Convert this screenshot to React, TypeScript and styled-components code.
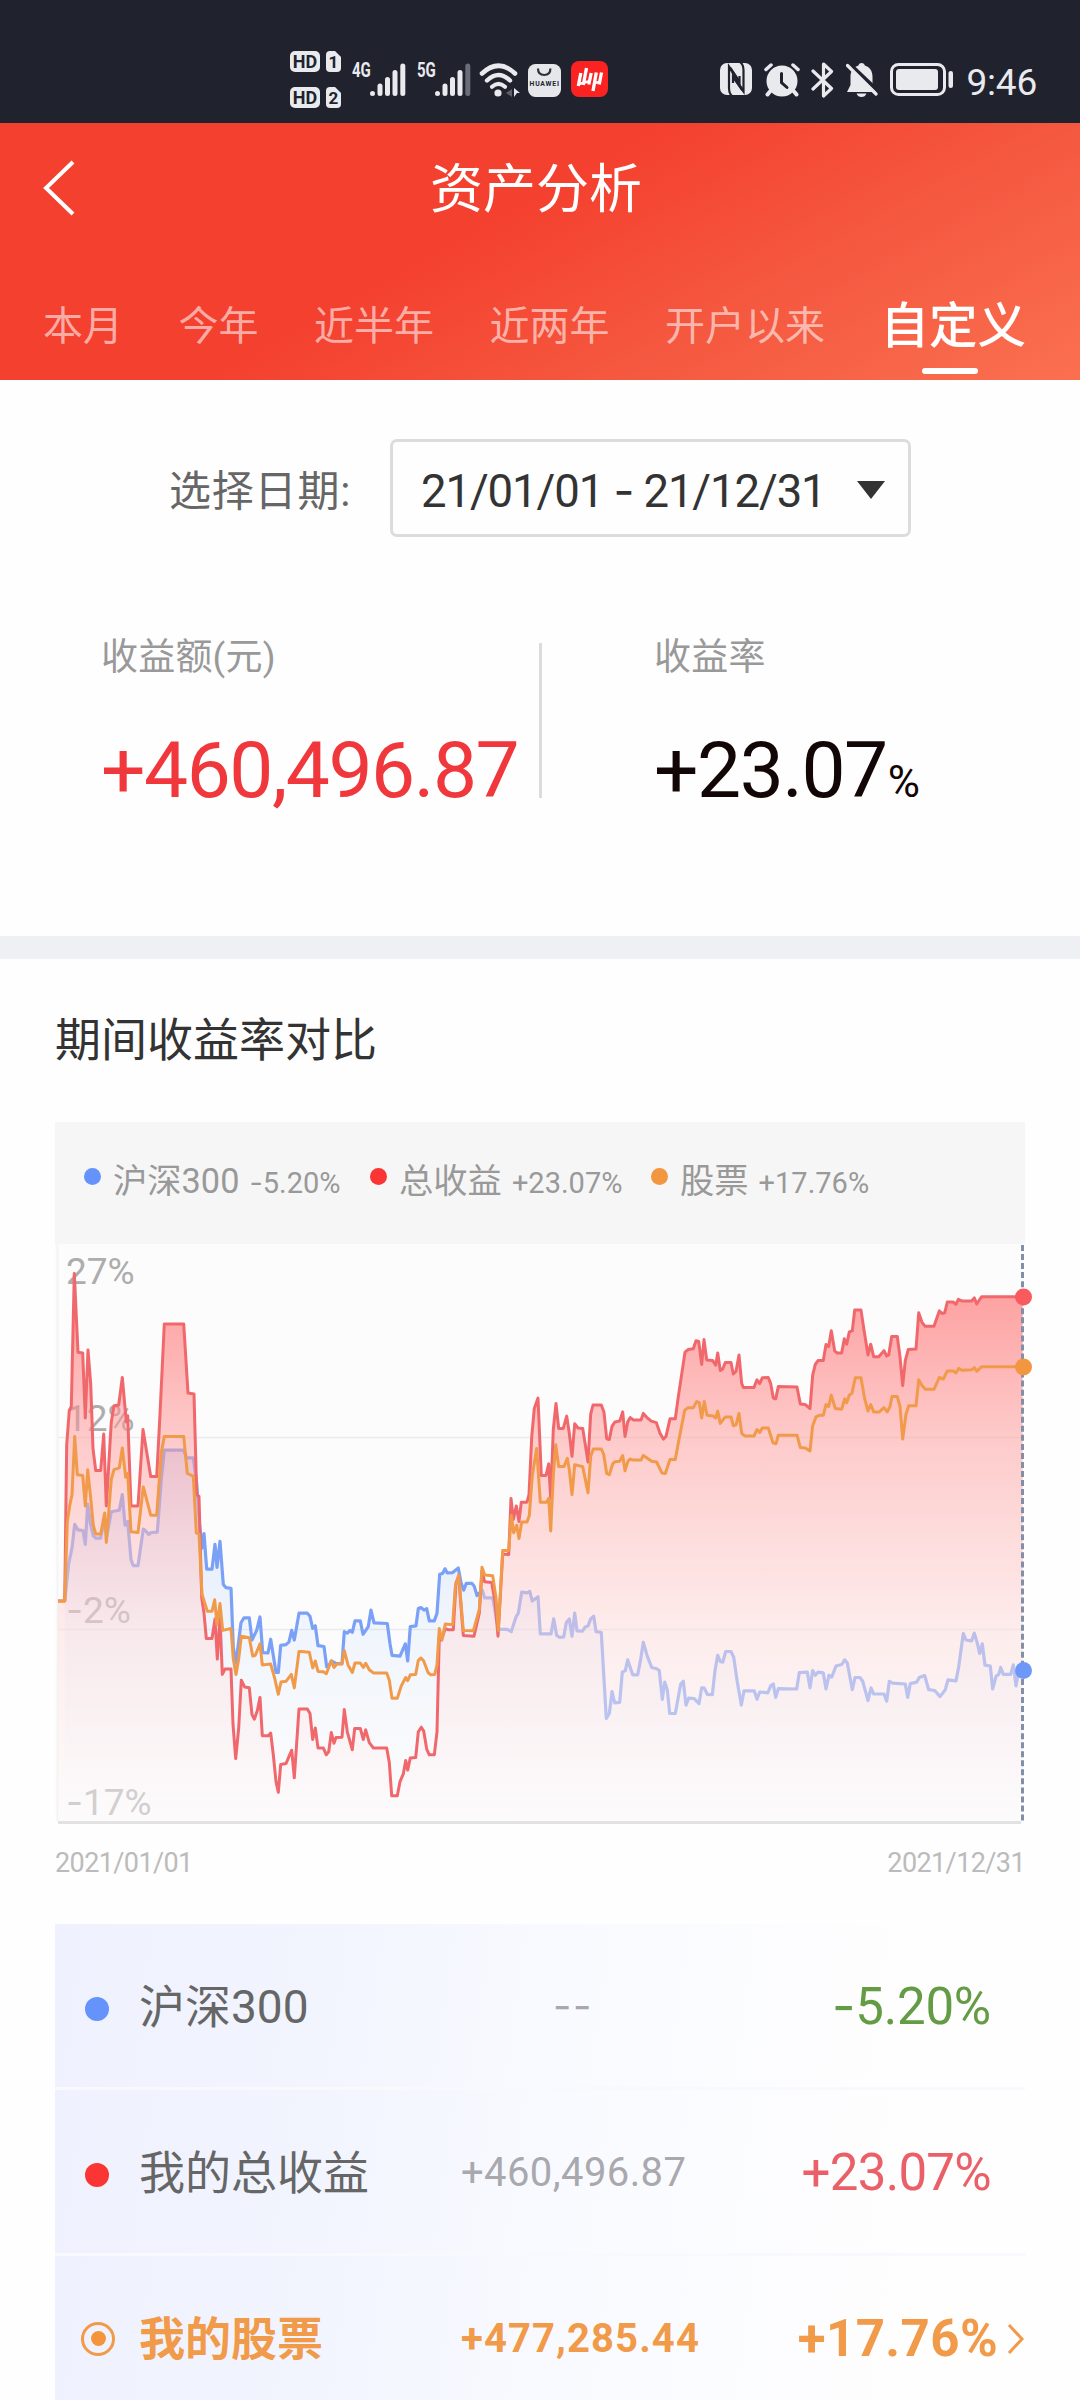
import React from "react";
import styled, { createGlobalStyle } from "styled-components";

const GlobalStyle = createGlobalStyle`
  * { box-sizing: border-box; }
  body { margin: 0; background: #fff; }
`;

const Page = styled.div`
  width: 1080px;
  height: 2400px;
  overflow: hidden;
  background: #fefefe;
  font-family: Roboto, "Noto Sans CJK SC", sans-serif;
  display: flex;
  flex-direction: column;
  svg { display: block; flex: none; }
`;

/* ---------- status bar ---------- */

const StatusBar = styled.div`
  height: 123px;
  flex: none;
  background: #20222e;
  padding: 51px 43px 0 290px;
  display: flex;
  align-items: flex-start;
  color: #e9eaee;
`;

const SimStack = styled.div`
  display: flex;
  flex-direction: column;
  gap: 15px;
  width: 63px;
`;

const SimRow = styled.div`
  display: flex;
  gap: 6px;
  height: 21px;
`;

const HdBadge = styled.span`
  width: 30px;
  height: 21px;
  border-radius: 5px;
  background: #e9eaee;
  color: #20222e;
  font: 700 18px/21px Roboto, sans-serif;
  text-align: center;
`;

const SimBadge = styled.span`
  width: 15px;
  height: 21px;
  border-radius: 4px;
  clip-path: polygon(0 0, 60% 0, 100% 28%, 100% 100%, 0 100%);
  background: #e9eaee;
  color: #20222e;
  font: 700 17px/22px Roboto, sans-serif;
  text-align: center;
`;

const NetGroup = styled.div<{ $w: number }>`
  display: flex;
  width: ${(p) => p.$w}px;
  padding-top: 12px;
`;

const NetLabel = styled.span`
  width: 18px;
  font: 700 20px/15px Roboto, sans-serif;
  transform: scaleX(0.75);
  transform-origin: left;
`;

const IconSlot = styled.div<{ $w: number; $top?: number }>`
  width: ${(p) => p.$w}px;
  padding-top: ${(p) => p.$top ?? 10}px;
  flex: none;
`;

const Clock = styled.span`
  padding-top: 14px;
  font: 400 37px/36px Roboto, sans-serif;
  letter-spacing: -0.2px;
  color: #e9eaee;
`;

const SignalBars = ({ weak }: { weak?: boolean }) => (
  <svg width="36" height="34" viewBox="0 0 36 34" strokeWidth="5" strokeLinecap="round" stroke="#e9eaee">
    <path d="M2.5 30.5v0.1M10 23v7.6M17.5 16.5v14.1M25 9.5v21.1" />
    <path d="M32.8 3v27.6" stroke={weak ? "#6b6d78" : "#e9eaee"} />
  </svg>
);

const WifiIcon = () => (
  <svg width="42" height="35" viewBox="0 0 42 35" fill="none" stroke="#e9eaee" strokeLinecap="round">
    <path d="M3 10.5Q19.500 -5 36 10.5" strokeWidth="4.600" />
    <path d="M8 17.5Q19.500 6.500 31 17.5" strokeWidth="4.400" />
    <path d="M13 23.8Q19.500 18 26 23.8" strokeWidth="4.200" />
    <circle cx="19" cy="30" r="3.600" fill="#e9eaee" stroke="none" />
    <path d="M33 26l-6 4 6 4z" fill="#5d5f69" stroke="none" />
    <path d="M35 25v9l3-4h3z" fill="#e9eaee" stroke="none" />
  </svg>
);

const HuaweiIcon = () => (
  <svg width="33" height="33" viewBox="0 0 33 33">
    <rect width="33" height="33" rx="7.5" fill="#e6e7ea" />
    <path d="M10 4.5q0 6.500 6.200 6.500t6.200-6.500" fill="none" stroke="#30323d" strokeWidth="2.2" />
    <text x="1.5" y="21.5" fontSize="6.8" fontWeight="700" fontFamily="Roboto, sans-serif" fill="#20222e" textLength="29.5">HUAWEI</text>
  </svg>
);

const BrokerIcon = () => (
  <svg width="37" height="36" viewBox="0 0 37 36">
    <rect width="37" height="36" rx="8" fill="#fb2322" />
    <g fill="none" stroke="#fff" strokeWidth="3.300">
      <path d="M9.800 12L7.300 25M15.500 7L12.300 24M20.200 12L17.800 23.500M25.300 11.500L22 30M30.500 11.500L28.200 23.500" />
      <path d="M8 23l9-2.500M23 22l6-1" strokeWidth="2.600" />
    </g>
  </svg>
);

const NfcIcon = () => (
  <svg width="32" height="32" viewBox="0 0 32 32">
    <rect width="32" height="32" rx="7" fill="#e9eaee" />
    <g fill="none" stroke="#20222e" strokeWidth="2.200" strokeLinejoin="miter">
      <path d="M12 33Q9 30.500 9 25V3.500L19.500 19V13" />
      <path d="M20 -1Q23.500 1.500 23.500 7V28.500L13 13.500V20" />
      <path d="M10 5l9 13.500M22.500 27l-9-13" strokeWidth="3" />
    </g>
  </svg>
);

const AlarmIcon = () => (
  <svg width="36" height="34" viewBox="0 0 36 34" stroke="#e9eaee" strokeLinecap="round" fill="none">
    <circle cx="18" cy="18" r="15.5" fill="#e9eaee" stroke="none" />
    <path d="M2 6.5L7 2M34 6.5L29 2" strokeWidth="3.5" />
    <path d="M6 28.5l-2.500 3M30 28.5l2.500 3" strokeWidth="4" />
    <path d="M17.5 10.5v9l5.500 5" stroke="#20222e" strokeWidth="3" />
  </svg>
);

const BluetoothIcon = () => (
  <svg width="23" height="36" viewBox="0 0 23 36" fill="none" stroke="#e9eaee" strokeWidth="3.200" strokeLinecap="round" strokeLinejoin="round">
    <path d="M2 9l18.500 17.500-8 7.500V2l8 7.500L2 27" />
  </svg>
);

const BellOffIcon = () => (
  <svg width="32" height="34" viewBox="0 0 32 34">
    <path d="M15.500 0c2 0 3 1 3.300 2.500 5 1.600 7.700 5.500 7.700 11V22l3.500 7H1l3.500-7v-8.500c0-5.500 3-9.400 8-11C12.800 1 13.700 0 15.500 0z" fill="#e9eaee" />
    <path d="M10.500 30.500h10q-1.500 3.500-5 3.500t-5-3.500z" fill="#e9eaee" />
    <path d="M2.500 0L32 28" stroke="#20222e" strokeWidth="4" />
    <path d="M1.500 2.500L30 31" stroke="#e9eaee" strokeWidth="3.200" strokeLinecap="round" />
  </svg>
);

const BatteryIcon = () => (
  <svg width="64" height="34" viewBox="0 0 64 34">
    <rect x="1.500" y="1.500" width="53" height="30" rx="7" fill="none" stroke="#e9eaee" strokeWidth="3" />
    <rect x="6" y="6" width="42" height="21" rx="3" fill="#e9eaee" />
    <rect x="58.500" y="8" width="4.500" height="17" rx="2.200" fill="#e9eaee" />
  </svg>
);

/* ---------- header ---------- */

const Header = styled.header`
  height: 257px;
  flex: none;
  background: linear-gradient(151deg, #f4402f 43%, #f55a41 72%, #fb7051 100%);
  color: #fff;
  display: flex;
  flex-direction: column;
`;

const TitleRow = styled.div`
  height: 132px;
  padding: 0 0 2px 42px;
  display: grid;
  grid-template-columns: 388px auto 1fr;
  align-items: center;
`;

const Title = styled.h1`
  margin: 0;
  padding-top: 4px;
  font-size: 53px;
  font-weight: 400;
  line-height: 60px;
`;

const Tabs = styled.nav`
  height: 125px;
  padding-left: 43px;
  display: flex;
  align-items: flex-start;
  gap: 55.5px;
  white-space: nowrap;
`;

const Tab = styled.span<{ $active?: boolean }>`
  display: flex;
  flex-direction: column;
  align-items: center;
  padding-top: 42px;
  font-size: ${(p) => (p.$active ? 48.5 : 40)}px;
  font-weight: ${(p) => (p.$active ? 500 : 400)};
  line-height: 60px;
  color: ${(p) => (p.$active ? "#fff" : "rgba(255,255,255,0.58)")};
  ${(p) =>
    p.$active &&
    `&::after { content: ""; width: 56px; height: 6px; margin-top: 11px; border-radius: 3px; background: #fff; transform: translateX(-3px); }`}
`;

/* ---------- summary ---------- */

const Summary = styled.section`
  height: 556px;
  flex: none;
  padding-top: 59px;
`;

const DateRow = styled.div`
  height: 98px;
  padding-left: 169px;
  display: grid;
  grid-template-columns: 221px 521px;
  align-items: center;
`;

const DateLabel = styled.span`
  font-size: 42px;
  letter-spacing: 0.8px;
  line-height: 60px;
  color: #666;
  padding-top: 8px;
`;

const DateBox = styled.div`
  height: 98px;
  border: 3px solid #dcdcdc;
  border-radius: 7px;
  padding: 4px 23px 0 28px;
  display: flex;
  align-items: center;
  justify-content: space-between;
  font-size: 45.5px;
  letter-spacing: -1.1px;
  color: #333;
  white-space: pre;
`;

const Stats = styled.div`
  margin-top: 96px;
  padding-left: 101px;
  display: grid;
  grid-template-columns: 438px 3px 1fr;
`;

const Divider = styled.div`
  margin-top: 10px;
  height: 155px;
  background: #dcdcdc;
`;

const Stat = styled.div<{ $pad?: number }>`
  padding-left: ${(p) => p.$pad ?? 0}px;
  padding-top: 2px;
  display: flex;
  flex-direction: column;
`;

const StatLabel = styled.span`
  font-size: 37px;
  line-height: 46px;
  letter-spacing: 0.2px;
  color: #999;
  white-space: nowrap;
`;

const StatValue = styled.div<{ $color: string }>`
  margin-top: 43px;
  height: 92px;
  font-size: 78.5px;
  line-height: 92px;
  letter-spacing: -1.5px;
  white-space: nowrap;
  color: ${(p) => p.$color};
  small { font-size: 44px; letter-spacing: 0; margin-left: 1px; }
`;

const Band = styled.div`
  height: 23px;
  flex: none;
  background: #eff0f3;
`;

/* ---------- chart ---------- */

const ChartSection = styled.section`
  padding: 0 55px;
  display: flex;
  flex-direction: column;
`;

const SectionTitle = styled.h2`
  margin: 48px 0 0;
  height: 115px;
  font-size: 46px;
  font-weight: 400;
  line-height: 66px;
  color: #333;
`;

const Legend = styled.div`
  width: 970px;
  height: 122px;
  background: #f6f6f6;
  padding: 0 0 3px 29px;
  display: flex;
  align-items: center;
  color: #999;
`;

const LegendItem = styled.div<{ $w: number }>`
  width: ${(p) => p.$w}px;
  display: flex;
  align-items: baseline;
  white-space: nowrap;
  font-size: 34.3px;
  line-height: 44px;
`;

const LegendDot = styled.i<{ $color: string }>`
  width: 17px;
  height: 17px;
  border-radius: 50%;
  margin-right: 12px;
  background: ${(p) => p.$color};
  transform: translateY(-8px);
`;

const LegendValue = styled.span`
  margin-left: 10px;
  font-size: 29px;
`;

const Dash = styled.span`
  font-family: Inter, sans-serif;
`;

const ChartBox = styled.div`
  width: 985px;
  height: 580px;
`;

const DateAxis = styled.div`
  width: 970px;
  height: 99px;
  padding-top: 22px;
  display: flex;
  justify-content: space-between;
  font-size: 27px;
  line-height: 34px;
  letter-spacing: -0.6px;
  color: #bbb;
`;

/* ---------- comparison table ---------- */

const Table = styled.div`
  width: 970px;
  padding-top: 1px;
`;

const Row = styled.div<{ $active?: boolean }>`
  height: 166px;
  padding-top: 2px;
  display: grid;
  grid-template-columns: 84px 322px 240px 1fr;
  align-items: center;
  background: linear-gradient(98deg, #eff2fe 0%, #f2f5fe 28%, #f9faff 52%, #fefefe 88%);
  border-bottom: 3px solid #f8f9fc;
  white-space: nowrap;
  line-height: 60px;
  font-weight: ${(p) => (p.$active ? 700 : 400)};
  color: ${(p) => (p.$active ? "#f09a4a" : "#666")};
`;

const RowDot = styled.i<{ $color: string }>`
  width: 24px;
  height: 24px;
  margin: 5px 0 0 30px;
  border-radius: 50%;
  background: ${(p) => p.$color};
`;

const RowRing = styled.i`
  width: 34px;
  height: 34px;
  margin-left: 26px;
  border: 3px solid #f09a4a;
  border-radius: 50%;
  display: grid;
  place-items: center;
  &::after { content: ""; width: 15px; height: 15px; border-radius: 50%; background: #f4953c; }
`;

const RowName = styled.span`
  font-size: 46px;
`;

const RowAmount = styled.span<{ $color: string; $indent?: number; $ls?: number }>`
  padding-left: ${(p) => p.$indent ?? 0}px;
  font-size: 40px;
  letter-spacing: ${(p) => p.$ls ?? 0}px;
  color: ${(p) => p.$color};
`;

const RowRate = styled.span<{ $color: string; $end: number; $ls?: number }>`
  display: flex;
  align-items: center;
  justify-content: flex-end;
  padding-right: ${(p) => p.$end}px;
  gap: 9px;
  font-size: 51px;
  letter-spacing: ${(p) => p.$ls ?? -0.7}px;
  color: ${(p) => p.$color};
`;

/* Each series is split in four quarters, 750 units wide; y grows downward. */
const QUARTER = 750;
const UNIT_X = 3;
const UNIT_Y = 2.613;

const total = [
  "24,968 44,968 50,560 58,470 64,460 73,112 84,318 98,320 106,490 114,312 122,400 129,570 137,627 152,627 161,532 169,720 184,500 192,458 206,456 217,384 229,500 233,484 243,720 264,720 279,520 302,643 320,643 330,480 343,244 401,244 414,425 432,427 440,690 447,695 455,960 462,1000 469,1066 486,1066 495,1015 502,1120 510,1010 517,1160 525,1146 543,1146 549,1290 557,1380 566,1300 574,1175 584,1193 598,1195 606,1265 613,1277 622,1255 630,1220 637,1320 655,1320 662,1313 670,1370 678,1440 685,1468 692,1395 708,1393 725,1358 733,1430 747,1250",
  "5,1250 22,1250 30,1262 38,1330 46,1300 54,1352 70,1352 79,1370 86,1362 94,1312 102,1340 108,1325 126,1324 133,1252 142,1310 157,1357 164,1301 181,1301 190,1330 197,1305 208,1338 220,1352 260,1352 268,1390 275,1477 292,1477 300,1440 310,1420 317,1385 323,1410 331,1378 347,1377 355,1310 364,1298 371,1308 380,1355 388,1370 403,1370 411,1310 418,1060 424,1070 436,1040 444,1043 460,1043 468,920 476,905 490,1058 522,1060 538,1000 546,890 554,918 575,920 585,970 594,1060 608,845 626,847 633,700 640,755 649,720 657,760 664,710 681,710 687,690 695,540 703,465 714,438 724,640 738,640 746,610 752,700",
  "10,520 18,452 26,517 40,517 50,485 58,530 66,590 74,505 84,516 98,517 106,560 114,605 122,480 129,456 154,456 162,475 170,544 178,546 186,512 195,500 209,498 218,474 225,538 233,500 241,489 250,495 273,495 280,478 290,488 304,498 319,502 330,530 340,545 348,538 360,492 376,492 384,440 396,370 405,318 415,311 430,309 438,288 446,290 455,350 462,285 470,338 488,340 497,352 503,320 511,366 518,362 526,345 543,345 550,375 558,368 567,325 575,400 580,410 612,410 621,390 629,400 637,385 655,384 662,400 670,438 677,440 685,408 741,409 751,453",
  "16,455 30,465 38,378 46,350 54,340 70,340 78,298 86,303 94,262 104,315 112,320 125,320 133,283 140,297 148,265 157,262 164,208 183,208 192,260 204,325 212,297 221,330 236,330 252,314 260,328 266,325 275,277 292,277 300,330 308,405 316,340 325,311 348,310 356,215 366,240 375,250 402,250 418,210 426,217 434,215 442,187 460,187 468,193 475,180 485,184 515,184 523,176 530,192 545,173 668,173",
];

const stocks = [
  "24,968 44,968 52,760 60,715 66,690 74,538 82,638 98,640 106,720 113,625 122,700 130,770 137,793 152,793 164,738 169,815 184,650 192,625 208,620 217,568 227,645 233,635 243,787 264,789 280,670 302,744 320,744 334,580 343,538 401,538 412,635 430,642 439,790 447,793 456,950 472,995 486,995 494,965 501,1030 510,975 518,1045 543,1040 550,1120 558,1160 566,1120 574,1060 598,1064 608,1112 616,1110 630,1080 637,1135 662,1133 674,1170 685,1212 693,1180 708,1178 724,1160 733,1195 747,1100",
  "3,1100 28,1102 38,1143 46,1125 54,1152 70,1153 79,1158 94,1125 102,1142 110,1133 126,1133 133,1098 144,1135 157,1155 165,1130 181,1130 190,1142 197,1131 208,1148 220,1156 260,1156 268,1175 276,1222 292,1222 304,1190 317,1168 323,1176 331,1161 347,1160 355,1123 363,1117 371,1125 384,1155 392,1161 404,1160 411,1135 418,1040 426,1070 436,1028 458,1030 466,930 476,900 490,1045 520,1046 538,990 546,880 554,900 578,902 588,960 595,1045 608,836 626,836 634,745 641,790 650,770 657,805 665,762 681,762 688,745 697,640 710,570 721,710 740,710 746,700 752,785",
  "10,640 17,560 26,617 42,617 52,595 58,625 66,690 74,612 98,617 114,685 122,590 130,571 154,571 161,585 170,635 178,638 188,610 195,604 209,603 218,588 225,628 233,604 240,597 250,600 273,600 280,588 305,603 320,605 336,634 346,635 360,598 376,598 386,550 404,470 414,463 430,463 440,447 448,450 455,490 463,447 471,483 490,485 497,490 503,472 511,504 526,487 543,487 550,510 558,508 567,478 575,530 584,537 612,537 621,520 629,528 637,516 655,516 669,555 678,557 685,535 741,535 751,567",
  "16,568 30,576 38,510 48,487 58,483 70,483 78,455 86,460 94,430 106,465 125,467 134,440 140,450 148,430 156,425 166,385 183,385 194,440 204,472 212,455 221,474 238,474 252,463 262,474 270,460 276,434 292,434 300,460 308,545 318,480 326,458 348,458 356,390 366,405 376,415 402,415 418,384 430,388 442,367 460,367 468,372 476,360 485,365 515,364 523,358 530,368 545,356 668,356",
];

const index300 = [
  "44,968 56,870 66,830 74,768 84,782 99,784 106,820 113,715 122,770 130,798 138,804 152,804 164,750 170,800 184,735 208,731 217,690 225,770 233,760 243,860 250,876 264,876 280,780 288,786 296,794 304,789 322,788 334,650 343,574 401,574 410,594 430,594 440,660 448,760 456,830 462,792 470,885 486,885 495,820 501,880 510,812 520,925 528,933 543,935 550,1090 558,1130 573,1025 582,1012 598,1012 606,1070 620,1045 630,1010 638,1103 654,1104 662,1068 678,1155 685,1155 692,1084 708,1082 717,1075 725,1045 733,1070 747,1000",
  "5,1000 22,1000 30,1008 38,1040 46,1033 54,1085 72,1087 80,1140 86,1138 94,1125 110,1132 126,1132 133,1048 142,1052 150,1045 157,1050 165,1020 181,1020 189,1055 205,1035 213,992 222,1025 262,1027 270,1080 276,1110 300,1112 316,1080 323,1125 331,1035 348,1033 355,988 363,985 372,992 380,988 388,1020 403,1020 411,1000 419,898 428,896 435,884 442,895 458,894 475,882 483,920 491,940 499,922 516,922 523,930 531,954 547,940 554,960 578,960 590,1020 598,1042 622,1042 634,1048 648,1010 655,1000 665,945 681,947 689,943 697,968 714,957 721,1054 745,1054",
  "3,1054 11,1015 20,1058 28,1063 41,1062 49,1025 58,1015 66,1060 74,1000 81,1046 97,1047 106,1036 114,1033 122,1015 131,1008 138,1048 154,1050 161,1160 169,1275 178,1262 186,1205 194,1234 209,1233 217,1154 226,1150 233,1122 248,1161 263,1161 272,1120 280,1076 291,1110 305,1142 320,1145 328,1150 337,1225 344,1180 352,1200 359,1262 376,1262 392,1185 400,1178 408,1240 416,1222 432,1223 447,1236 455,1195 463,1196 472,1212 487,1213 495,1150 503,1110 511,1126 518,1128 527,1100 543,1100 551,1115 562,1180 574,1240 582,1203 613,1203 621,1225 629,1206 653,1208 662,1190 670,1185 677,1220 685,1197 740,1198 748,1155",
  "22,1154 30,1195 38,1150 46,1162 54,1154 70,1156 78,1198 87,1162 95,1167 108,1138 125,1134 134,1122 142,1130 157,1200 165,1168 180,1168 188,1178 204,1228 213,1195 221,1211 252,1211 260,1230 268,1178 278,1183 316,1185 323,1220 331,1184 350,1180 358,1168 374,1163 386,1200 404,1202 420,1218 436,1200 444,1174 468,1177 476,1140 490,1053 498,1070 515,1072 523,1052 532,1078 539,1105 547,1080 555,1136 571,1138 578,1198 588,1165 596,1160 602,1142 610,1160 632,1160 640,1135 648,1190 656,1150 668,1152",
];

const PLOT_BOTTOM = 577;

function linePath(quarters: string[]): string {
  const points = quarters.flatMap((quarter, q) =>
    quarter.split(" ").map((pair) => {
      const [x, y] = pair.split(",").map(Number);
      return `${((q * QUARTER + x) / UNIT_X - 5).toFixed(1)} ${(y / UNIT_Y - 13.5).toFixed(1)}`;
    })
  );
  return `M${points.join("L")}`;
}

const areaPath = (quarters: string[], startX: number) =>
  `${linePath(quarters)}V${PLOT_BOTTOM}H${startX}Z`;

const axisLabels = [
  { y: 39.6, text: "27%" },
  { y: 186.5, text: "12%" },
  { y: 379, text: "2%", negative: true },
  { y: 570.5, text: "17%", negative: true },
];

const Chart = () => (
  <svg width="985" height="580" viewBox="0 0 985 580">
    <defs>
      <linearGradient id="redFill" gradientUnits="userSpaceOnUse" x1="0" y1="30" x2="0" y2={PLOT_BOTTOM}>
        <stop offset="0" stopColor="#ff4444" stopOpacity="0.52" />
        <stop offset="0.3" stopColor="#ff9c9c" stopOpacity="0.52" />
        <stop offset="0.65" stopColor="#ffdcdc" stopOpacity="0.5" />
        <stop offset="1" stopColor="#fdfafb" stopOpacity="0.45" />
      </linearGradient>
      <linearGradient id="blueFill" gradientUnits="userSpaceOnUse" x1="0" y1="200" x2="0" y2={PLOT_BOTTOM}>
        <stop offset="0" stopColor="#6e9cff" stopOpacity="0.26" />
        <stop offset="0.45" stopColor="#8ab4ff" stopOpacity="0.11" />
        <stop offset="1" stopColor="#a0c0ff" stopOpacity="0" />
      </linearGradient>
    </defs>
    <rect x="0" y="0" width="968" height="577" fill="#fcfcfc" />
    <path d="M2.5 0V577" stroke="#f4f4f4" strokeWidth="2" />
    <path d="M3 193.5H967M3 385.5H967" stroke="#ebebeb" strokeWidth="1.5" />
    <g fontFamily="Roboto, sans-serif" fontSize="37" fill="#adadad">
      {axisLabels.map((label) => (
        <text key={label.text} x="11" y={label.y}>
          {label.negative && <tspan fontFamily="Inter, sans-serif">-</tspan>}
          {label.text}
        </text>
      ))}
    </g>
    <path d={areaPath(index300, 10)} fill="url(#blueFill)" />
    <path d={linePath(index300)} fill="none" stroke="#7ba1f7" strokeWidth="3.2" strokeLinejoin="round" />
    <path d={areaPath(total, 3)} fill="url(#redFill)" />
    <path d={linePath(total)} fill="none" stroke="#f0686c" strokeWidth="3" strokeLinejoin="round" />
    <path d={linePath(stocks)} fill="none" stroke="#f09a4a" strokeWidth="3" strokeLinejoin="round" />
    <path d="M3 578.5H966" stroke="#e2e2e2" strokeWidth="3" />
    <path d="M967.5 1V577" stroke="#8190a8" strokeWidth="3" strokeDasharray="6 3.040" />
    <circle cx="968.5" cy="53" r="8.5" fill="#f85a5e" />
    <circle cx="968.5" cy="123" r="8.5" fill="#f2963f" />
    <circle cx="968.5" cy="426.5" r="8.5" fill="#6e98f8" />
  </svg>
);

const TABS = ["本月", "今年", "近半年", "近两年", "开户以来", "自定义"];

export default function App() {
  return (
    <Page>
      <GlobalStyle />
      <StatusBar>
        <SimStack>
          <SimRow><HdBadge>HD</HdBadge><SimBadge>1</SimBadge></SimRow>
          <SimRow><HdBadge>HD</HdBadge><SimBadge>2</SimBadge></SimRow>
        </SimStack>
        <NetGroup $w={65}><NetLabel>4G</NetLabel><SignalBars /></NetGroup>
        <NetGroup $w={63}><NetLabel>5G</NetLabel><SignalBars weak /></NetGroup>
        <IconSlot $w={49} $top={12}><WifiIcon /></IconSlot>
        <IconSlot $w={43} $top={12.5}><HuaweiIcon /></IconSlot>
        <IconSlot $w={149}><BrokerIcon /></IconSlot>
        <IconSlot $w={44} $top={12}><NfcIcon /></IconSlot>
        <IconSlot $w={47} $top={12}><AlarmIcon /></IconSlot>
        <IconSlot $w={35} $top={11}><BluetoothIcon /></IconSlot>
        <IconSlot $w={44} $top={12}><BellOffIcon /></IconSlot>
        <IconSlot $w={76} $top={12}><BatteryIcon /></IconSlot>
        <Clock>9:46</Clock>
      </StatusBar>

      <Header>
        <TitleRow>
          <svg width="34" height="58" viewBox="0 0 34 58" fill="none" stroke="#fff" strokeWidth="4">
            <path d="M31 3L4 29l27 26" />
          </svg>
          <Title>资产分析</Title>
        </TitleRow>
        <Tabs>
          {TABS.map((tab, i) => (
            <Tab key={tab} $active={i === TABS.length - 1}>{tab}</Tab>
          ))}
        </Tabs>
      </Header>

      <Summary>
        <DateRow>
          <DateLabel>选择日期:</DateLabel>
          <DateBox>
            <span>21/01/01 <Dash>-</Dash> 21/12/31</span>
            <svg width="28" height="18" viewBox="0 0 28 18"><path d="M0 0h28L14 18z" fill="#333" /></svg>
          </DateBox>
        </DateRow>
        <Stats>
          <Stat>
            <StatLabel>收益额(元)</StatLabel>
            <StatValue $color="#f0383c">+460,496.87</StatValue>
          </Stat>
          <Divider />
          <Stat $pad={112}>
            <StatLabel>收益率</StatLabel>
            <StatValue $color="#120606">+23.07<small>%</small></StatValue>
          </Stat>
        </Stats>
      </Summary>

      <Band />

      <ChartSection>
        <SectionTitle>期间收益率对比</SectionTitle>
        <Legend>
          <LegendItem $w={286}>
            <LegendDot $color="#6592fb" />沪深300<LegendValue><Dash>-</Dash>5.20%</LegendValue>
          </LegendItem>
          <LegendItem $w={281}>
            <LegendDot $color="#fb3434" />总收益<LegendValue>+23.07%</LegendValue>
          </LegendItem>
          <LegendItem $w={240}>
            <LegendDot $color="#f2963f" />股票<LegendValue>+17.76%</LegendValue>
          </LegendItem>
        </Legend>
        <ChartBox><Chart /></ChartBox>
        <DateAxis><span>2021/01/01</span><span>2021/12/31</span></DateAxis>
        <Table>
          <Row>
            <RowDot $color="#6592fb" />
            <RowName>沪深300</RowName>
            <RowAmount $color="#a9a9ad" $indent={92} $ls={1.5}><Dash>--</Dash></RowAmount>
            <RowRate $color="#649c46" $end={34} $ls={-0.2}><span><Dash>-</Dash>5.20%</span></RowRate>
          </Row>
          <Row>
            <RowDot $color="#fb3434" />
            <RowName>我的总收益</RowName>
            <RowAmount $color="#a9a9ad" $ls={0.4}>+460,496.87</RowAmount>
            <RowRate $color="#ea6068" $end={34}>+23.07%</RowRate>
          </Row>
          <Row $active>
            <RowRing />
            <RowName>我的股票</RowName>
            <RowAmount $color="#f09a4a" $ls={1.1}>+477,285.44</RowAmount>
            <RowRate $color="#f09a4a" $end={0} $ls={0.4}>
              +17.76%
              <svg width="18" height="32" viewBox="0 0 18 32" fill="none" stroke="#f09a4a" strokeWidth="3">
                <path d="M2 2l13 14L2 30" />
              </svg>
            </RowRate>
          </Row>
        </Table>
      </ChartSection>
    </Page>
  );
}
